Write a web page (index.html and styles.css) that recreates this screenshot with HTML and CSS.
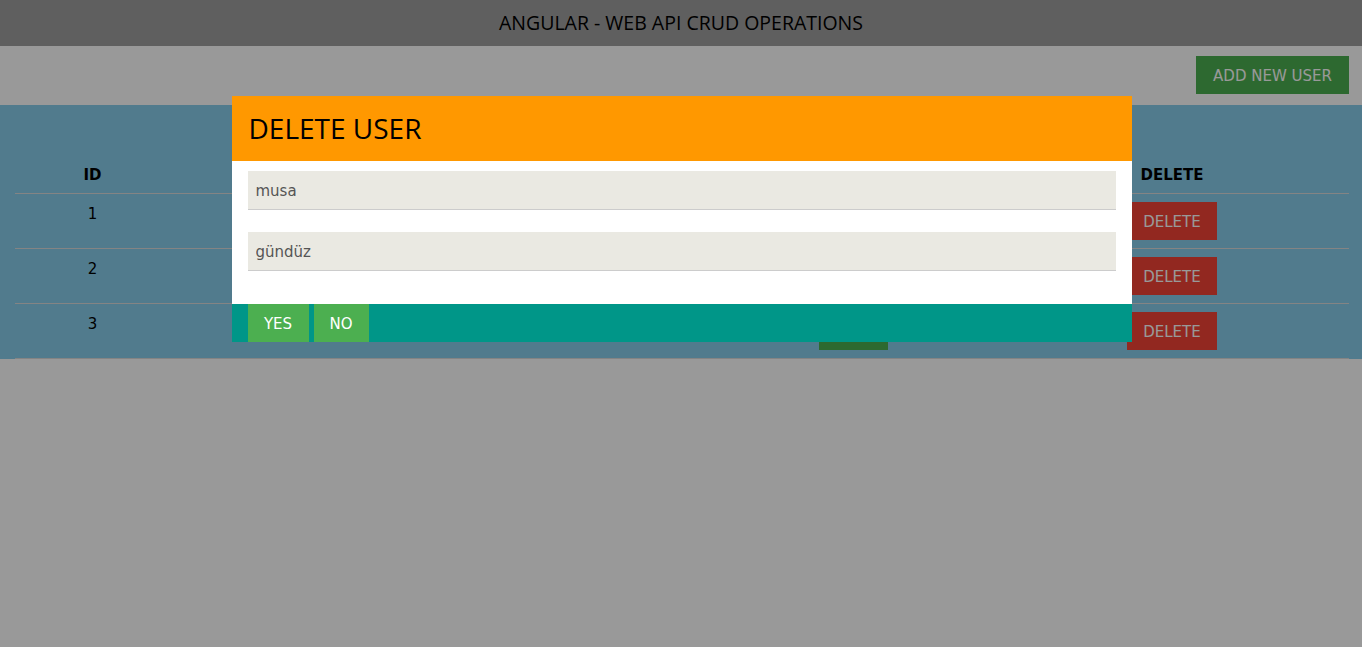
FILE: index.html
```html
<!DOCTYPE html>
<html lang="tr">
<head>
<meta charset="utf-8">
<title>Angular - Web API CRUD Operations</title>
<link rel="stylesheet" href="styles.css">
</head>
<body>
<header class="topbar">
  <h1 class="topbar-title">ANGULAR - WEB API CRUD OPERATIONS</h1>
</header>
<div class="toolbar">
  <button class="btn btn-green">ADD NEW USER</button>
</div>
<section class="users">
  <table class="user-table">
    <colgroup>
      <col class="c-id"><col class="c-name"><col class="c-name"><col class="c-edit"><col class="c-del">
    </colgroup>
    <thead>
      <tr><th>ID</th><th>FIRST NAME</th><th>LAST NAME</th><th>EDIT</th><th>DELETE</th></tr>
    </thead>
    <tbody>
      <tr><td>1</td><td>musa</td><td>gündüz</td><td><button class="btn btn-green">EDIT</button></td><td><button class="btn btn-red">DELETE</button></td></tr>
      <tr><td>2</td><td>ali</td><td>yılmaz</td><td><button class="btn btn-green">EDIT</button></td><td><button class="btn btn-red">DELETE</button></td></tr>
      <tr><td>3</td><td>ayşe</td><td>demir</td><td><button class="btn btn-green">EDIT</button></td><td><button class="btn btn-red">DELETE</button></td></tr>
    </tbody>
  </table>
</section>

<div class="overlay">
  <div class="modal">
    <div class="modal-head">
      <h2 class="modal-title">DELETE USER</h2>
    </div>
    <div class="modal-body">
      <input class="field" type="text" value="musa" readonly>
      <input class="field" type="text" value="gündüz" readonly>
    </div>
    <div class="modal-foot">
      <button class="btn btn-green btn-yes">YES</button>
      <button class="btn btn-green btn-no">NO</button>
    </div>
  </div>
</div>
</body>
</html>
```

FILE: styles.css
```css
html, body {
  margin: 0;
  padding: 0;
}
body {
  font-family: "DejaVu Sans", Verdana, sans-serif;
  font-size: 15px;
  line-height: 1.5;
  color: #000;
  background: #fff;
}
.topbar {
  background: #9e9e9e;
  height: 46px;
  display: flex;
  align-items: center;
  justify-content: center;
}
.topbar-title {
  margin: 0;
  font-family: "Open Sans", "Liberation Sans", sans-serif;
  font-weight: 400;
  font-size: 19.5px;
  color: #000;
}
.toolbar {
  display: flex;
  justify-content: flex-end;
  padding: 10px 13px 11px 16px;
}
.btn {
  border: none;
  font-family: "DejaVu Sans", Verdana, sans-serif;
  font-size: 15px;
  color: #fff;
  padding: 2px 0 0;
  height: 38px;
  cursor: pointer;
  line-height: 36px;
  box-sizing: border-box;
}
.btn-green { background: #4caf50; }
.btn-red { background: #f44336; }
.toolbar .btn { width: 153px; }
.users {
  background: #87ceeb;
  padding: 49px 13px 0 15px;
}
.user-table {
  width: 100%;
  border-collapse: collapse;
  table-layout: fixed;
}
.c-id { width: 155px; }
.c-name { width: 271px; }
.c-edit { width: 283px; }
.c-del { width: auto; }
.user-table th, .user-table td {
  padding: 8px;
  text-align: center;
  vertical-align: top;
  border-bottom: 1px solid #ddd;
}
.user-table th {
  font-weight: bold;
  font-size: 15px;
  padding: 10px 8px 6px;
}
.user-table td {
  line-height: 24px;
}
.user-table td .btn-green { width: 69px; }
.user-table td .btn-red { width: 90px; }

.overlay {
  position: fixed;
  inset: 0;
  background: rgba(0, 0, 0, 0.4);
  display: flex;
  justify-content: center;
  align-items: flex-start;
}
.modal {
  margin-top: 96px;
  width: 900px;
  margin-left: 1px;
  background: #fff;
}
.modal-head {
  background: #ff9800;
  height: 65px;
  display: flex;
  align-items: center;
  padding: 0 17px;
}
.modal-title {
  margin: 0 0 2px;
  font-family: "Open Sans", "Liberation Sans", sans-serif;
  font-weight: 400;
  font-size: 28px;
  color: #000;
}
.modal-body {
  padding: 10px 16px 33px;
  display: flex;
  flex-direction: column;
  gap: 22px;
}
.field {
  display: block;
  box-sizing: border-box;
  width: 100%;
  height: 39px;
  border: none;
  border-bottom: 1px solid #ccc;
  background: #eae9e2;
  padding: 2px 8px 0;
  font-family: "DejaVu Sans", Verdana, sans-serif;
  font-size: 15px;
  color: #555;
  outline: none;
}
.modal-foot {
  background: #009688;
  height: 38px;
  padding: 0 16px;
  display: flex;
  gap: 5px;
}
.btn-yes { width: 61px; }
.btn-no { width: 55px; }
```
